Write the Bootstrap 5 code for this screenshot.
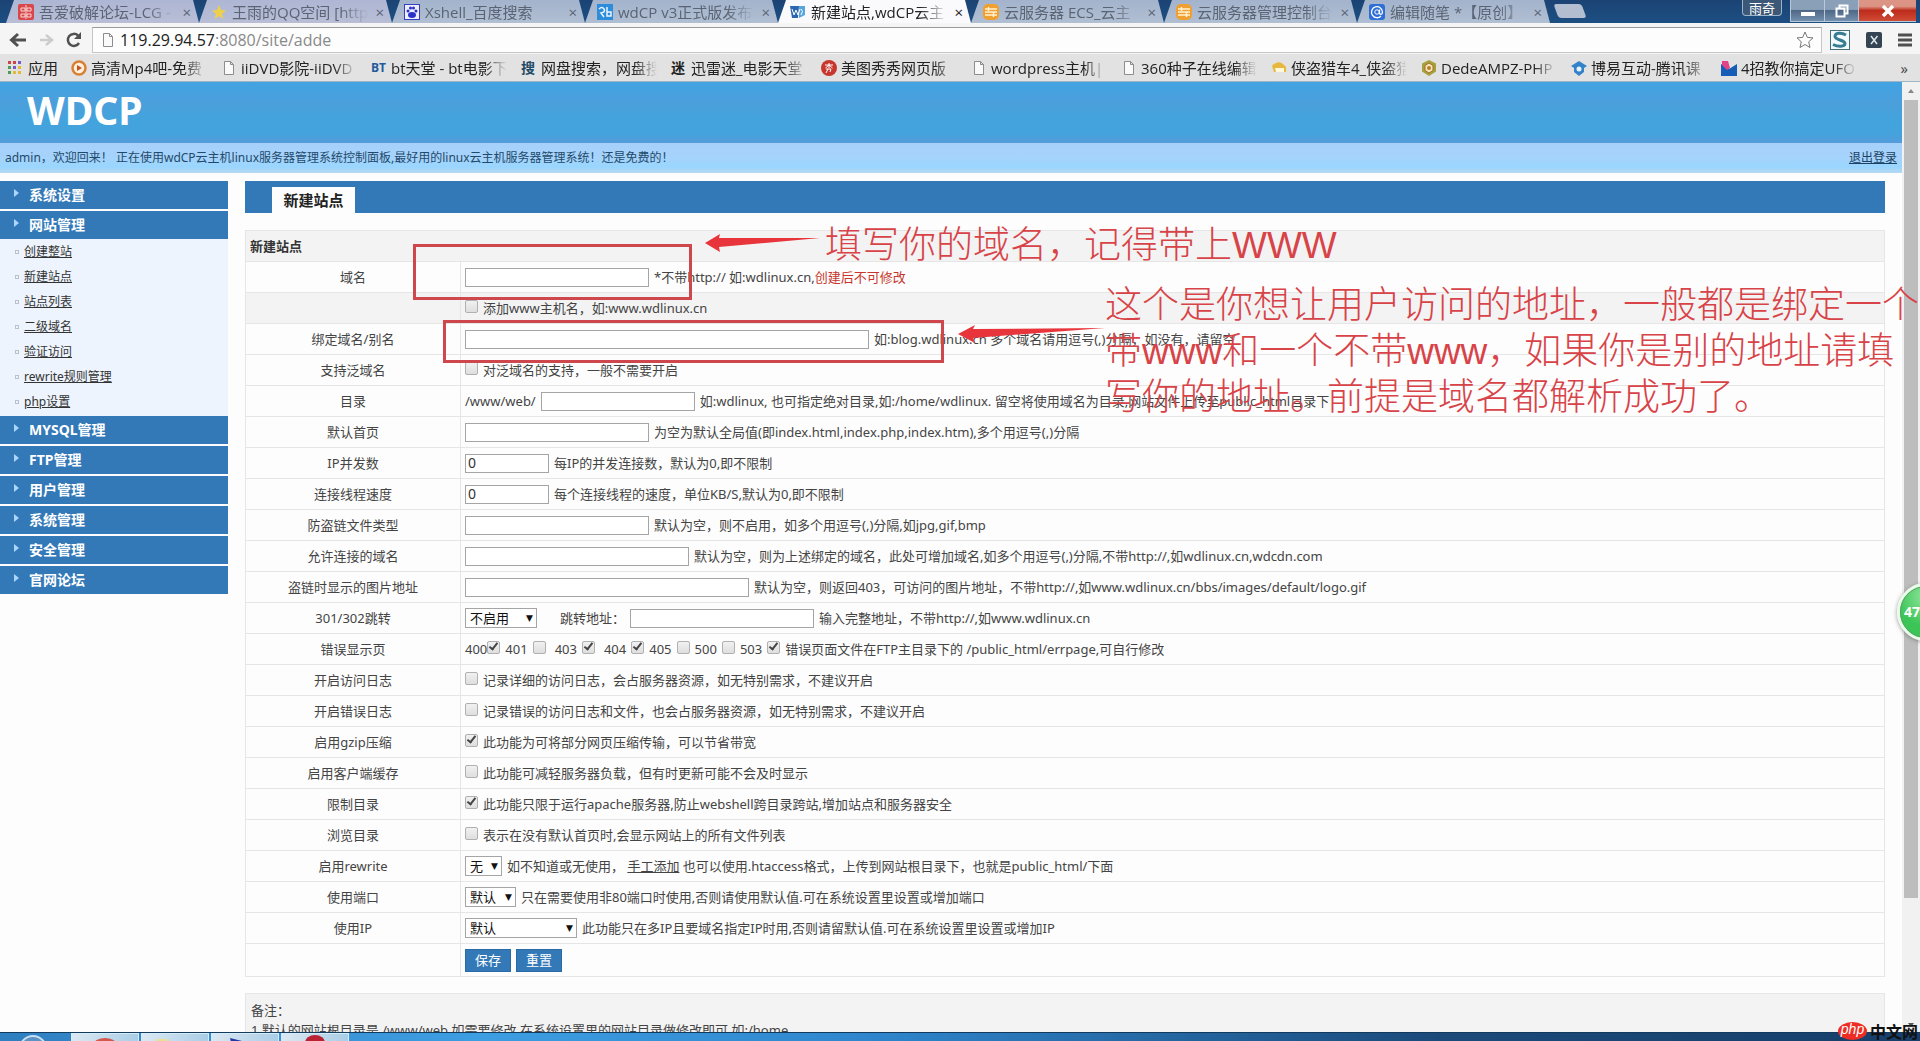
<!DOCTYPE html>
<html lang="zh-CN">
<head>
<meta charset="utf-8">
<meta name="viewport" content="width=device-width, initial-scale=1">
<title>新建站点,wdCP云主机</title>
<link href="https://cdn.jsdelivr.net/npm/bootstrap@5.3.0/dist/css/bootstrap.min.css" rel="stylesheet">
<style>
:root{--bar:#3379b8;--line:#e6e6e6;--ink:#444;--mark-red:#d84348}
html,body{height:100%}
body{font-family:"Noto Sans","Noto Sans CJK SC",sans-serif;font-size:13px;line-height:20px;color:var(--ink);background:#fdfdfd;overflow:hidden}
svg{display:block;flex:none}
.fade-text{white-space:nowrap;overflow:hidden;-webkit-mask-image:linear-gradient(90deg,#000 80%,transparent);mask-image:linear-gradient(90deg,#000 80%,transparent)}
/* browser frame */
.tabstrip{height:23px;background:linear-gradient(#1b4374,#1d4f83);padding-left:6px;flex:none}
.btab{width:193px;height:23px;padding:0 8px 0 12px;gap:5px;font-size:15px;color:#5b6474;background:linear-gradient(#a3b3cc,#b0bfd2);clip-path:polygon(0 100%,8px 0,187px 0,100% 100%);flex:none;font-family:"Open Sans","Noto Sans CJK SC",sans-serif}
.btab.warm{background:linear-gradient(#adb6d4,#b9bed6)}
.btab.current{background:#fafafc;color:#222}
.btab .fade-text{width:136px;flex:none}
.btab-x,.plain-btn{border:0;background:none;padding:0;color:inherit;line-height:16px}
.btab-x{margin-left:auto}
.newtab{width:28px;height:14px;border:0;margin:4px 0 0 6px;background:#b3bfd0;transform:skewX(20deg);border-radius:3px}
.userchip{height:16px;width:40px;font-size:13px;line-height:12px;color:#fff;background:#3d5876;border:1px solid #9db3ca;border-top:0;border-radius:0 0 4px 4px;padding:0;margin-right:8px}
.winbtn{height:22px;border:1px solid #b7c8da;border-top:0;border-right:0;padding:0;background:linear-gradient(#8aa0b9 45%,#4e6886 50%,#7390ae);color:#fff;display:flex;align-items:center;justify-content:center}
.winbtn{width:34px}
.winbtn.shut{width:58px;background:linear-gradient(#dc9484 30%,#bd2b1b 50%,#d04c37)}
.toolbar{height:31px;background:#f5f5f5;padding:4px 8px 1px;gap:8px;flex:none}
.addr{height:26px;border:1px solid #c6c6c6;border-top-color:#9a9a9a;background:#fdfdfd;padding:0 7px;gap:4px}
.url-text{font:16px/22px "Open Sans",sans-serif;color:#8a8a8a;white-space:nowrap}
.url-text b{font-weight:400;color:#222}
.bookmarks{height:28px;background:#e2e2e2;border-bottom:1px solid #9db5c4;padding:0 8px;font:15px/22px "Open Sans","Noto Sans CJK SC",sans-serif;flex:none}
.bookmarks a{color:#222;text-decoration:none;gap:4px}
.bm{width:150px;flex:none}
.bm .fade-text{width:116px;flex:none}
.bm.apps{width:63px;gap:6px}
.bm-glyph{width:16px;font-size:14px;font-weight:700;line-height:16px;flex:none}
.bm-bt{font-size:12px;color:#235a9b}
.bm-so{color:#234b66}
/* page */
.site-head{height:61px;background:linear-gradient(#42a3e2,#4b9fdb 35%,#43a3dc 60%,#44a3dc 85%,#559cdb);padding-left:27px;color:#fff;font-size:39px;font-weight:700;line-height:56px}
.welcome{height:30px;background:linear-gradient(#a6d0fa,#a5d3fb 50%,#99d6ff 80%,#b8d9f0);color:#1f4a6b;font-size:12px;padding:0 5px}
.welcome a{color:#1c4163}
.sidebar{width:228px;flex:none}
.menu-head{height:28px;background:var(--bar);color:#fff;font-size:14px;font-weight:700;margin-bottom:2px;border:0;width:100%;padding:0 0 0 14px;gap:10px;text-align:left}
.menu-head::before{content:"";border:4px solid transparent;border-left:5px solid #a9d5ff;border-right:0;margin-top:-4px}
.menu-open{margin-bottom:0}
.submenu{background:#edf4fd;padding:0 0 2px 15px}
.submenu li{height:25px;font-size:12px;gap:5px}
.submenu li::before{content:"";width:4px;height:4px;border:1px solid #b9c1cb}
.submenu a{color:#333}
.workspace{padding:8px 17px 0}
.tabbar{height:32px;background:var(--bar);padding:6px 0 0 27px}
.tabbar a{background:#fdfdfd;color:#222;font-size:15px;font-weight:700;width:83px;height:26px;text-align:center;text-decoration:none;line-height:26px}
.form-sheet{table-layout:fixed;width:100%;margin-top:17px;border:1px solid var(--line);border-collapse:collapse}
.form-sheet .key-col{width:215px}
.form-sheet td,.form-sheet th{height:31px;border:1px solid var(--line);padding:0 4px}
.form-sheet tbody th{font-weight:400;text-align:center}
.form-sheet .sheet-title{background:#f3f3f3;font-weight:700;color:#333}
.form-sheet .shade>*{background:#f3f3f3}
.form-sheet .last>*{height:33px}
.cells{display:flex;align-items:center;gap:5px;white-space:nowrap}
.tbox{height:19px;border:1px solid #a5a5a5;background:#fff;padding:0 2px;font-size:14px;color:#333;border-radius:0}
.w-s{width:84px}.w-d{width:154px}.w-m{width:184px}.w-l{width:224px}.w-xl{width:284px}.w-xxl{width:404px}
.tick{appearance:none;width:13px;height:13px;margin:0 0 3px;border:1px solid #b0b0b0;border-radius:2px;background:linear-gradient(#f1f1f1,#dedede);position:relative;flex:none}
.tick:checked::before{content:"";position:absolute;left:3px;top:-1px;width:5px;height:9px;border:solid #444;border-width:0 2px 2px 0;transform:rotate(38deg)}
.pick{position:relative;display:inline-flex}
.pick select{appearance:none;height:20px;border:1px solid #a5a5a5;border-radius:0;background:#fff;color:#111;font-size:13px;line-height:18px;padding:0 4px;width:100%}
.pick::after{content:"▼";position:absolute;right:4px;top:0;font:9px/20px "DejaVu Sans",sans-serif;color:#111;pointer-events:none}
.p1{width:72px;margin-right:18px}.p2{width:37px}.p3{width:51px}.p4{width:112px}
.act{background:var(--bar);border:1px solid #2a6aa5;color:#fff;width:46px;height:23px;font-size:13px;line-height:20px;padding:0}
.red-note{color:#c8352c}
.notes{margin-top:16px;border:1px solid var(--line);background:#f3f3f3;padding:6px 5px;line-height:20px;height:80px}
.scroller{width:18px;background:#f1f1f1;flex:none}
.thumb{background:#bdbdbd;margin:0 2px;flex:0 0 84%}
.up{height:18px}
/* annotations drawn over the form */
.note-layer{position:absolute;inset:0;pointer-events:none;overflow:hidden}
.note-layer>*{position:absolute}
.callout{font:300 37px/46px "Liberation Sans","Noto Sans CJK SC",sans-serif;color:var(--mark-red);white-space:nowrap}
.frame{border:3px solid #cd474c}
.f1{left:413px;top:244px;width:279px;height:56px}
.f2{left:443px;top:320px;width:501px;height:43px}
.c1{left:825px;top:223px}
.c2{left:1105px;top:283px}
.a1{left:705px;top:233px}
.a2{left:958px;top:324px}
.ball{right:-35px;top:583px;width:58px;height:58px;border-radius:50%;border:3px solid #e9fbe9;background:radial-gradient(circle at 50% 20%,#8fe69b,#3cc557 60%);box-shadow:0 1px 4px #5559;outline:1px solid #56a566;outline-offset:-4px;color:#fff;font-size:14px;font-weight:700;line-height:52px;padding-left:4px}
.phpmark{right:0;bottom:0;height:20px;font:700 16px/20px "Noto Sans CJK SC",sans-serif;color:#111;white-space:nowrap;width:82px}
.phpmark span{background:#ed2d25;color:#fff;border-radius:50%;width:29px;height:18px;font:italic 14px/15px "Liberation Sans",sans-serif;text-align:center;flex:none;margin-right:3px}
.taskbar{height:9px;background:linear-gradient(90deg,#2f7fc0,#3e9ee2 25%,#2f86cd 45%,#1b4a7a 75%,#173f6b);border-top:1px solid #12395e;flex:none;padding-left:71px;gap:2px;overflow:hidden}
.tk{width:68px;height:12px;border:1px solid #d5ecfb;background:linear-gradient(90deg,#dbe8f2,#a9cde6);display:flex;justify-content:center}
.orb{position:absolute;left:18px;bottom:-26px;width:30px;height:32px;border-radius:50%;border:2px solid #c7dff3;background:#5c93c4}
</style>
<script src="https://cdn.jsdelivr.net/npm/bootstrap@5.3.0/dist/js/bootstrap.bundle.min.js"></script>
</head>
<body class="d-flex flex-column vh-100 position-relative">
<svg width="0" height="0" class="position-absolute" aria-hidden="true">
<symbol id="doc" viewBox="0 0 16 16"><path d="M3.5 1.5h6l3 3v10h-9zM9.500 1.500v3h3" fill="#fafafa" stroke="#8d8d8d"/></symbol>
<symbol id="ecs" viewBox="0 0 16 16"><rect width="16" height="16" rx="5" fill="#f0a030"/><path d="M2 5h12M2 8h12M2 11h12M5.500 3v4M10.500 8v5" stroke="#fff2d4" stroke-width="1.500"/></symbol>
</svg>

<div class="tabstrip d-flex">
  <div class="btab warm d-flex align-items-center"><svg width="16" height="16"><rect width="16" height="16" rx="2" fill="#d9474a"/><path d="M3 4h4v3H3zM9 4h4v3H9zM3 10h4v3H3zM9 10h4v3H9zM8 1v14" stroke="#f9dada" fill="none"/></svg><span class="fade-text">吾爱破解论坛-LCG -</span><button class="btab-x" aria-label="关闭">×</button></div>
  <div class="btab warm d-flex align-items-center"><svg width="16" height="16"><path d="M8 1l2 5 5 .5-4 3.500 1.500 5L8 12l-4.500 3L5 10 1 6.500 6 6z" fill="#efd04d"/></svg><span class="fade-text">王雨的QQ空间 [http</span><button class="btab-x" aria-label="关闭">×</button></div>
  <div class="btab d-flex align-items-center"><svg width="16" height="16"><rect x=".5" y=".5" width="15" height="15" fill="#eef" stroke="#3340c0"/><g fill="#2932c8"><ellipse cx="8" cy="11" rx="4" ry="3"/><circle cx="4" cy="7" r="1.500"/><circle cx="6.500" cy="4" r="1.500"/><circle cx="9.500" cy="4" r="1.500"/><circle cx="12" cy="7" r="1.500"/></g></svg><span class="fade-text">Xshell_百度搜索</span><button class="btab-x" aria-label="关闭">×</button></div>
  <div class="btab d-flex align-items-center"><svg width="16" height="16"><rect width="16" height="16" fill="#2d8ddb"/><path d="M2 5q3-3 5 0t-3 4l3 4M10 3v9h4V8h-4" stroke="#e8f5ff" stroke-width="1.500" fill="none"/></svg><span class="fade-text">wdCP v3正式版发布</span><button class="btab-x" aria-label="关闭">×</button></div>
  <div class="btab current d-flex align-items-center"><svg width="16" height="16"><path d="M0 2h9l-1 12H2z" fill="#2b66ae"/><path d="M9 2h6v9l-6 3z" fill="#56a6dd"/><path d="M2 5l2 6 2-5 2 5 2-6M11 5q3 2 0 6" stroke="#fff" fill="none"/></svg><span class="fade-text">新建站点,wdCP云主</span><button class="btab-x" aria-label="关闭">×</button></div>
  <div class="btab d-flex align-items-center"><svg width="16" height="16"><use href="#ecs"/></svg><span class="fade-text">云服务器 ECS_云主</span><button class="btab-x" aria-label="关闭">×</button></div>
  <div class="btab d-flex align-items-center"><svg width="16" height="16"><use href="#ecs"/></svg><span class="fade-text">云服务器管理控制台</span><button class="btab-x" aria-label="关闭">×</button></div>
  <div class="btab d-flex align-items-center"><svg width="16" height="16"><rect width="16" height="16" rx="3" fill="#2d6fd6"/><path d="M12 12a5.500 5.500 0 1 1 1.500-4c0 3-3 3-3 1V5.500" fill="none" stroke="#fff" stroke-width="1.300"/><circle cx="8" cy="8" r="2.200" fill="none" stroke="#fff"/></svg><span class="fade-text">编辑随笔 *【原创】</span><button class="btab-x" aria-label="关闭">×</button></div>
  <button class="newtab" aria-label="新标签页"></button>
  <div class="ms-auto d-flex pe-1">
    <button class="userchip">雨奇</button>
    <button class="winbtn" aria-label="最小化"><svg width="16" height="16"><path d="M1 9h14v4H1z" fill="#fff"/></svg></button>
    <button class="winbtn" aria-label="还原"><svg width="16" height="16"><path d="M5.500 5V2.500h8v8H11M2.500 5.500h8v8h-8z" fill="none" stroke="#fff" stroke-width="2"/></svg></button>
    <button class="winbtn shut" aria-label="关闭窗口"><svg width="16" height="16"><path d="M3 3l10 10M13 3L3 13" stroke="#fff" stroke-width="3.500"/></svg></button>
  </div>
</div>
<div class="toolbar d-flex align-items-center">
  <button class="plain-btn" aria-label="后退"><svg width="20" height="18"><path d="M18 9H4M10 3L3.500 9l6.500 6" fill="none" stroke="#505050" stroke-width="3"/></svg></button>
  <button class="plain-btn" aria-label="前进"><svg width="20" height="18"><path d="M4 9h11M10 4l6 5-6 5" fill="none" stroke="#ccc" stroke-width="2.500"/></svg></button>
  <button class="plain-btn" aria-label="刷新"><svg width="20" height="18"><path d="M15 12a6 6 0 1 1-1-7.500" fill="none" stroke="#505050" stroke-width="2.500"/><path d="M17 1v7h-7z" fill="#505050"/></svg></button>
  <div class="addr d-flex align-items-center flex-grow-1"><svg width="16" height="18"><use href="#doc"/></svg><span class="url-text"><b>119.29.94.57</b>:8080/site/adde</span>
    <svg class="ms-auto" width="18" height="18" viewBox="0 0 18 18"><path d="M9 1l2.300 5.400 5.700.5-4.300 3.900 1.300 5.700L9 13.500l-5 3 1.300-5.700L1 6.900l5.700-.5z" fill="#fff" stroke="#777"/></svg></div>
  <svg width="20" height="20"><rect x=".5" y=".5" width="19" height="19" fill="#f3fafb" stroke="#456f7c"/><path d="M16 5C11 2 5 3 5 6.500S15 10 15 13.500 8 17 3 14.500" fill="none" stroke="#377d91" stroke-width="3"/></svg>
  <svg class="ms-2" width="16" height="16"><rect width="16" height="16" rx="2" fill="#354452"/><path d="M5 4l6 8M11.500 4L5 12" stroke="#dce6ec" stroke-width="1.500"/></svg>
  <svg class="ms-2" width="14" height="16"><path d="M0 3h14M0 8h14M0 13h14" stroke="#505050" stroke-width="3"/></svg>
</div>
<nav class="bookmarks d-flex align-items-center">
  <a href="#" class="bm apps d-flex align-items-center"><svg width="14" height="14"><path d="M0 0h3v3H0zM5 0h3v3H5z" fill="#c44"/><path d="M10 0h3v3h-3zM5 5h3v3H5z" fill="#7a59c8"/><path d="M0 5h3v3H0zM0 10h3v3H0z" fill="#4a9f55"/><path d="M10 5h3v3h-3zM5 10h3v3H5zM10 10h3v3h-3z" fill="#e4b934"/></svg><span>应用</span></a>
  <a href="#" class="bm d-flex align-items-center"><svg width="16" height="16"><circle cx="8" cy="8" r="6.500" fill="#fff0df" stroke="#d98034" stroke-width="2.500"/><path d="M6 5l5 3-5 3z" fill="#c4541f"/></svg><span class="fade-text">高清Mp4吧-免费</span></a>
  <a href="#" class="bm d-flex align-items-center"><svg width="16" height="16"><use href="#doc"/></svg><span class="fade-text">iiDVD影院-iiDVD</span></a>
  <a href="#" class="bm d-flex align-items-center"><span class="bm-glyph bm-bt">BT</span><span class="fade-text">bt天堂 - bt电影下</span></a>
  <a href="#" class="bm d-flex align-items-center"><span class="bm-glyph bm-so">搜</span><span class="fade-text">网盘搜索，网盘搜</span></a>
  <a href="#" class="bm d-flex align-items-center"><span class="bm-glyph">迷</span><span class="fade-text">迅雷迷_电影天堂</span></a>
  <a href="#" class="bm d-flex align-items-center"><svg width="16" height="16"><circle cx="8" cy="8" r="8" fill="#c8372d"/><path d="M4 5h8M8 3v5M4.500 8L8 5l3.500 3M5 9h5l-1 3M7 9l-2 4" stroke="#fff" fill="none"/></svg><span class="fade-text">美图秀秀网页版</span></a>
  <a href="#" class="bm d-flex align-items-center"><svg width="16" height="16"><use href="#doc"/></svg><span class="fade-text">wordpress主机||</span></a>
  <a href="#" class="bm d-flex align-items-center"><svg width="16" height="16"><use href="#doc"/></svg><span class="fade-text">360种子在线编辑</span></a>
  <a href="#" class="bm d-flex align-items-center"><svg width="16" height="16"><path d="M1 6q7-8 14 1v5H3z" fill="#e6b93e"/><path d="M4 8h9v4H5z" fill="#fff8df"/></svg><span class="fade-text">侠盗猎车4_侠盗猎</span></a>
  <a href="#" class="bm d-flex align-items-center"><svg width="16" height="16"><path d="M8 0l7 3.500v8L8 16l-7-4.500v-8z" fill="#a5a13c"/><path d="M8 3l4 2.500v5L8 13l-4-2.500v-5z" fill="#f3e6bb" stroke="#a96c22"/><circle cx="8" cy="8" r="2" fill="#b77d29"/></svg><span class="fade-text">DedeAMPZ-PHP</span></a>
  <a href="#" class="bm d-flex align-items-center"><svg width="16" height="16"><path d="M8 1l8 5-3 2v4l-5 4-5-4V8L0 6z" fill="#3483c9"/><circle cx="8" cy="9" r="2.500" fill="#e5f3ff"/></svg><span class="fade-text">博易互动-腾讯课</span></a>
  <a href="#" class="bm d-flex align-items-center"><svg width="16" height="16"><path d="M0 4l8 5 8-5v12H0z" fill="#165eb5"/><path d="M1 1h6l2 7-3 2-5-5z" fill="#e24286"/></svg><span class="fade-text">4招教你搞定UFO</span></a>
  <button class="plain-btn ms-auto pe-1" aria-label="更多书签">»</button>
</nav>

<div class="d-flex flex-grow-1 overflow-hidden">
  <div class="flex-grow-1 overflow-hidden">
    <header class="site-head">WDCP</header>
    <div class="welcome d-flex justify-content-between align-items-center"><span>admin，欢迎回来！ 正在使用wdCP云主机linux服务器管理系统控制面板,最好用的linux云主机服务器管理系统！还是免费的！</span><a href="#">退出登录</a></div>
    <div class="d-flex">
      <nav class="sidebar pt-2">
        <button class="menu-head d-flex align-items-center">系统设置</button>
        <button class="menu-head menu-open d-flex align-items-center">网站管理</button>
        <ul class="submenu list-unstyled mb-0">
          <li class="d-flex align-items-center"><a href="#">创建整站</a></li>
          <li class="d-flex align-items-center"><a href="#">新建站点</a></li>
          <li class="d-flex align-items-center"><a href="#">站点列表</a></li>
          <li class="d-flex align-items-center"><a href="#">二级域名</a></li>
          <li class="d-flex align-items-center"><a href="#">验证访问</a></li>
          <li class="d-flex align-items-center"><a href="#">rewrite规则管理</a></li>
          <li class="d-flex align-items-center"><a href="#">php设置</a></li>
        </ul>
        <button class="menu-head d-flex align-items-center">MYSQL管理</button>
        <button class="menu-head d-flex align-items-center">FTP管理</button>
        <button class="menu-head d-flex align-items-center">用户管理</button>
        <button class="menu-head d-flex align-items-center">系统管理</button>
        <button class="menu-head d-flex align-items-center">安全管理</button>
        <button class="menu-head d-flex align-items-center">官网论坛</button>
      </nav>
      <main class="workspace flex-grow-1">
        <div class="tabbar d-flex"><a href="#">新建站点</a></div>
        <form>
        <table class="form-sheet">
          <colgroup><col class="key-col"><col></colgroup>
          <thead><tr><th colspan="2" class="sheet-title">新建站点</th></tr></thead>
          <tbody>
          <tr><th><label for="dom">域名</label></th><td><div class="cells"><input id="dom" class="tbox w-m"><span>*不带http:// 如:wdlinux.cn,<span class="red-note">创建后不可修改</span></span></div></td></tr>
          <tr class="shade"><th></th><td><div class="cells"><input type="checkbox" class="tick" id="www"><label for="www">添加www主机名，如:www.wdlinux.cn</label></div></td></tr>
          <tr><th><label for="alias">绑定域名/别名</label></th><td><div class="cells"><input id="alias" class="tbox w-xxl"><span>如:blog.wdlinux.cn 多个域名请用逗号(,)分隔，如没有，请留空</span></div></td></tr>
          <tr><th>支持泛域名</th><td><div class="cells"><input type="checkbox" class="tick" id="wild"><label for="wild">对泛域名的支持，一般不需要开启</label></div></td></tr>
          <tr><th><label for="dir">目录</label></th><td><div class="cells"><span>/www/web/</span><input id="dir" class="tbox w-d"><span>如:wdlinux, 也可指定绝对目录,如:/home/wdlinux. 留空将使用域名为目录,网站文件上传至public_html目录下</span></div></td></tr>
          <tr><th><label for="idx">默认首页</label></th><td><div class="cells"><input id="idx" class="tbox w-m"><span>为空为默认全局值(即index.html,index.php,index.htm),多个用逗号(,)分隔</span></div></td></tr>
          <tr><th><label for="ipc">IP并发数</label></th><td><div class="cells"><input id="ipc" class="tbox w-s" value="0"><span>每IP的并发连接数，默认为0,即不限制</span></div></td></tr>
          <tr><th><label for="spd">连接线程速度</label></th><td><div class="cells"><input id="spd" class="tbox w-s" value="0"><span>每个连接线程的速度，单位KB/S,默认为0,即不限制</span></div></td></tr>
          <tr><th><label for="ext">防盗链文件类型</label></th><td><div class="cells"><input id="ext" class="tbox w-m"><span>默认为空，则不启用，如多个用逗号(,)分隔,如jpg,gif,bmp</span></div></td></tr>
          <tr><th><label for="alw">允许连接的域名</label></th><td><div class="cells"><input id="alw" class="tbox w-l"><span>默认为空，则为上述绑定的域名，此处可增加域名,如多个用逗号(,)分隔,不带http://,如wdlinux.cn,wdcdn.com</span></div></td></tr>
          <tr><th><label for="pic">盗链时显示的图片地址</label></th><td><div class="cells"><input id="pic" class="tbox w-xl"><span>默认为空，则返回403，可访问的图片地址，不带http://,如www.wdlinux.cn/bbs/images/default/logo.gif</span></div></td></tr>
          <tr><th><label for="redir">301/302跳转</label></th><td><div class="cells"><span class="pick p1"><select id="redir"><option>不启用</option></select></span><label for="to">跳转地址：</label><input id="to" class="tbox w-m"><span>输入完整地址，不带http://,如www.wdlinux.cn</span></div></td></tr>
          <tr><th>错误显示页</th><td><div class="cells">
            <span class="d-flex align-items-center"><label for="e400">400</label><input type="checkbox" class="tick" id="e400" checked></span>
            <label for="e401">401</label><input type="checkbox" class="tick me-1" id="e401">
            <label for="e403">403</label><input type="checkbox" class="tick me-1" id="e403" checked>
            <label for="e404">404</label><input type="checkbox" class="tick" id="e404" checked>
            <label for="e405">405</label><input type="checkbox" class="tick" id="e405">
            <label for="e500">500</label><input type="checkbox" class="tick" id="e500">
            <label for="e503">503</label><input type="checkbox" class="tick" id="e503" checked>
            <span>错误页面文件在FTP主目录下的 /public_html/errpage,可自行修改</span></div></td></tr>
          <tr><th>开启访问日志</th><td><div class="cells"><input type="checkbox" class="tick" id="al"><label for="al">记录详细的访问日志，会占服务器资源，如无特别需求，不建议开启</label></div></td></tr>
          <tr><th>开启错误日志</th><td><div class="cells"><input type="checkbox" class="tick" id="el"><label for="el">记录错误的访问日志和文件，也会占服务器资源，如无特别需求，不建议开启</label></div></td></tr>
          <tr><th>启用gzip压缩</th><td><div class="cells"><input type="checkbox" class="tick" id="gz" checked><label for="gz">此功能为可将部分网页压缩传输，可以节省带宽</label></div></td></tr>
          <tr><th>启用客户端缓存</th><td><div class="cells"><input type="checkbox" class="tick" id="cc"><label for="cc">此功能可减轻服务器负载，但有时更新可能不会及时显示</label></div></td></tr>
          <tr><th>限制目录</th><td><div class="cells"><input type="checkbox" class="tick" id="ld" checked><label for="ld">此功能只限于运行apache服务器,防止webshell跨目录跨站,增加站点和服务器安全</label></div></td></tr>
          <tr><th>浏览目录</th><td><div class="cells"><input type="checkbox" class="tick" id="bd"><label for="bd">表示在没有默认首页时,会显示网站上的所有文件列表</label></div></td></tr>
          <tr><th><label for="rw">启用rewrite</label></th><td><div class="cells"><span class="pick p2"><select id="rw"><option>无</option></select></span><span>如不知道或无使用， <a href="#" class="text-reset">手工添加</a> 也可以使用.htaccess格式，上传到网站根目录下，也就是public_html/下面</span></div></td></tr>
          <tr><th><label for="port">使用端口</label></th><td><div class="cells"><span class="pick p3"><select id="port"><option>默认</option></select></span><span>只在需要使用非80端口时使用,否则请使用默认值.可在系统设置里设置或增加端口</span></div></td></tr>
          <tr><th><label for="ip">使用IP</label></th><td><div class="cells"><span class="pick p4"><select id="ip"><option>默认</option></select></span><span>此功能只在多IP且要域名指定IP时用,否则请留默认值.可在系统设置里设置或增加IP</span></div></td></tr>
          <tr class="last"><th></th><td><div class="cells"><button type="button" class="act">保存</button><button type="reset" class="act">重置</button></div></td></tr>
          </tbody>
        </table>
        </form>
        <div class="notes">备注：<br>1 默认的网站根目录是 /www/web,如需要修改,在系统设置里的网站目录做修改即可,如:/home</div>
      </main>
    </div>
  </div>
  <div class="scroller d-flex flex-column"><svg class="up" width="18" height="18"><path d="M6 11l3-4 3 4z" fill="#888"/></svg><div class="thumb"></div><svg class="mt-auto" width="18" height="14"><path d="M6 5l3 4 3-4z" fill="#555"/></svg></div>
</div>
<div class="taskbar d-flex position-relative">
  <span class="orb"></span>
  <span class="tk"><svg width="22" height="12"><ellipse cx="11" cy="10" rx="11" ry="6" fill="#d3584d"/></svg></span>
  <span class="tk"><svg width="36" height="12"><path d="M0 10V5h10l2 2h24v5H0z" fill="#ecdf93"/></svg></span>
  <span class="tk"><svg width="30" height="12"><path d="M0 4l12 3 4 5H2z" fill="#2338a8"/></svg></span>
  <span class="tk"><svg width="22" height="12"><ellipse cx="11" cy="9" rx="10" ry="8" fill="#b92333"/></svg></span>
</div>

<div class="note-layer">
  <div class="frame f1"></div>
  <div class="frame f2"></div>
  <svg class="a1" width="116" height="20"><path d="M0 10L15 1l-1 4 101 0-101 9 1 5z" fill="#e8343b"/></svg>
  <svg class="a2" width="148" height="20"><path d="M0 10L17 1l-2 4L147 4 15 14l2 5z" fill="#e8343b"/></svg>
  <div class="callout c1">填写你的域名，记得带上WWW</div>
  <div class="callout c2">这个是你想让用户访问的地址，一般都是绑定一个<br>带www和一个不带www，如果你是别的地址请填<br>写你的地址。前提是域名都解析成功了。</div>
  <div class="ball">47</div>
  <div class="phpmark d-flex align-items-center"><span>php</span>中文网</div>
</div>
</body>
</html>
